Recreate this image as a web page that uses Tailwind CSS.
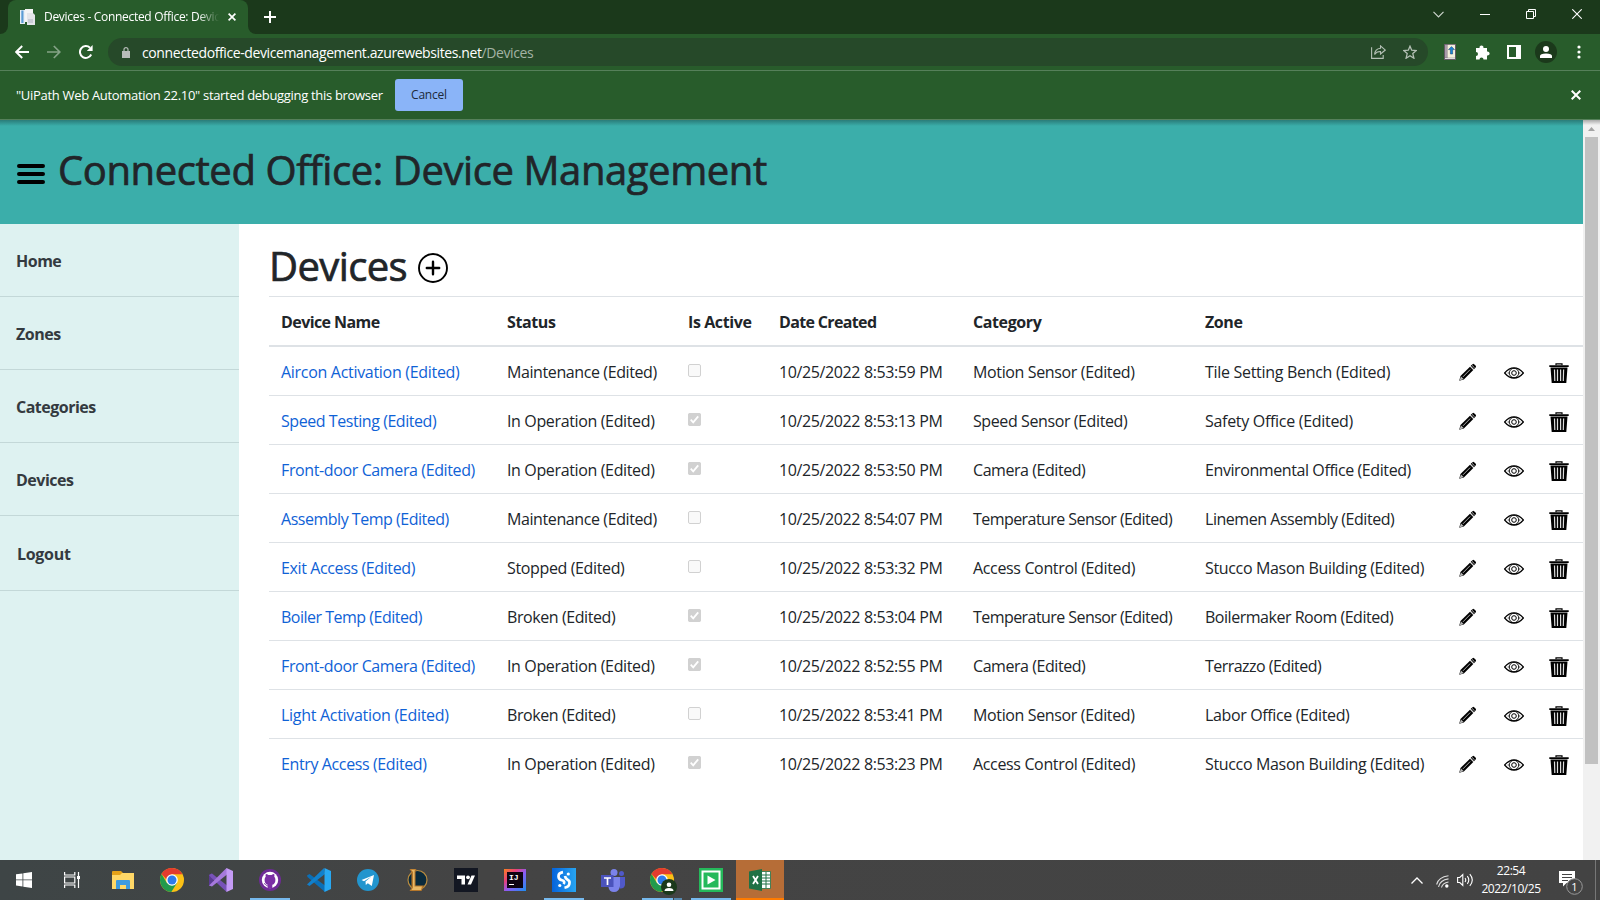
<!DOCTYPE html>
<html lang="en">
<head>
<meta charset="utf-8">
<title>Devices - Connected Office: Device Management</title>
<script src="https://cdn.jsdelivr.net/npm/@tailwindcss/browser@4"></script>
</head>
<body class="w-[1600px] h-[900px] overflow-hidden flex flex-col bg-white font-['Open_Sans','Noto_Sans',sans-serif] text-[#212529]">
<svg width="0" height="0" class="hidden">
  <symbol id="pencil" viewBox="0 0 20 20"><path d="M1.3 18.8 2.6 13.8 12.6 3.9 16.1 7.4 6.1 17.4Z" fill="#000"/><path d="M13.4 3 15.3 1.2Q16.1.5 17 1.3L18.7 3Q19.4 3.9 18.6 4.7L16.9 6.5Z" fill="#000"/><path d="m1.700 18.300 1.400-4.200 2.800 2.800Z" fill="#bbb"/><path d="m5.2 14.6 7.6-7.7M13 3.5l3.4 3.5M14.8 2.5l2.7 2.7" stroke="#ccc" stroke-width=".9" fill="none"/></symbol>
  <symbol id="eye" viewBox="0 0 20 12"><path d="M.6 6Q5 .9 10 .9T19.400 6Q15 11.100 10 11.100T.6 6Z" fill="none" stroke="#000" stroke-width="1.200"/><circle cx="10" cy="6" r="4.700" fill="none" stroke="#000" stroke-width=".9"/><circle cx="10" cy="6" r="2.300" fill="none" stroke="#000" stroke-width="1"/><path d="M3.400 6 4.600 4.800v2.400ZM16.600 6l-1.200-1.200v2.400Z" fill="#555"/></symbol>
  <symbol id="trash" viewBox="0 0 20 20"><path d="M7 2.2V.8h6v1.4" fill="none" stroke="#000" stroke-width="1.2"/><path d="M.3 2.2h19.4v1.7H.3ZM1.500 4.500h17L17.300 20H2.700Z" fill="#000"/><path d="m5.500 6.500.3 11.500M8.500 6.500V18M11.600 6.500V18M14.600 6.500 14.300 18" stroke="#ddd" stroke-width="1.200"/></symbol>
  <symbol id="chrome" viewBox="0 0 24 24"><circle cx="12" cy="12" r="12" fill="#fbc116"/><path d="M1.6 6A12 12 0 0 0 11.3 24L17 15 12 12 6.9 15Z" fill="#229a4c"/><path d="M1.6 6A12 12 0 0 1 22.4 6.2H12L7 12Z" fill="#e33b2e"/><circle cx="12" cy="12" r="5.8" fill="#fff"/><circle cx="12" cy="12" r="4.5" fill="#2f7bea"/></symbol>
</svg>

<!-- Tab strip -->
<div class="h-[34px] shrink-0 bg-[#1b391b] flex items-end justify-between">
  <div class="flex items-end h-full">
    <div class="w-2 h-2 bg-[#285c2b]"><div class="size-full bg-[#1b391b] rounded-br-lg"></div></div>
    <div class="w-[240px] h-full bg-[#285c2b] rounded-t-lg flex items-center pl-3 text-white">
      <svg class="w-4 h-[17px] shrink-0" viewBox="0 0 16 17"><path d="M0 1h5v14H0z" fill="#e8eef5"/><path d="M1.3 1.5h2.2v12.5H1.3z" fill="#5b9bd5"/><path d="M5 0h8v13H5z" fill="#f4f4f6"/><path d="M7 4h6l2 2v10H7z" fill="#e4e5ea"/><path d="M8 10h5v4H8z" fill="#c9ccd6"/></svg>
      <div class="ml-2 w-[175px] overflow-hidden whitespace-nowrap text-[12px] tracking-[-0.3px] [mask-image:linear-gradient(90deg,#000_88%,transparent)]">Devices - Connected Office: Device Management</div>
      <svg class="ml-[9px] size-[8px] shrink-0" viewBox="0 0 8 8"><path d="m.6.6 6.8 6.8m0-6.8L.6 7.4" stroke="#fff" stroke-width="1.7"/></svg>
    </div>
    <div class="w-2 h-2 bg-[#285c2b]"><div class="size-full bg-[#1b391b] rounded-bl-lg"></div></div>
    <svg class="ml-2 mb-[11px] size-3" viewBox="0 0 12 12"><path d="M6 0v12M0 6h12" stroke="#fff" stroke-width="2"/></svg>
  </div>
  <div class="flex items-center h-[28px] self-start text-white pr-[18px] gap-[36px]">
    <svg class="w-[11px] h-[7px]" viewBox="0 0 11 7"><path d="m.5.8 5 5 5-5" fill="none" stroke="#ccd4cc" stroke-width="1.2"/></svg>
    <svg class="w-[10px] h-[2px]" viewBox="0 0 10 2"><path d="M0 1.5h10" stroke="#fff"/></svg>
    <svg class="size-[10px]" viewBox="0 0 10 10"><path d="M.5 2.5h7v7h-7zM2.5 2.5v-2h7v7h-2" fill="none" stroke="#fff"/></svg>
    <svg class="size-[10px]" viewBox="0 0 10 10"><path d="m.3.3 9.4 9.4m0-9.4L.3 9.7" stroke="#fff" stroke-width="1.1"/></svg>
  </div>
</div>

<!-- Toolbar -->
<div class="h-[37px] shrink-0 bg-[#285c2b] border-b border-[#56805a] flex items-center text-white">
  <svg class="ml-[15px] size-[14px]" viewBox="0 0 14 14"><path d="M14 7H1.5M7.2 1 1.2 7l6 6" fill="none" stroke="#fff" stroke-width="1.9"/></svg>
  <svg class="ml-[18px] size-[14px]" viewBox="0 0 14 14"><path d="M0 7h12.5M6.8 1l6 6-6 6" fill="none" stroke="#85a287" stroke-width="1.7"/></svg>
  <svg class="ml-[18px] size-[14px]" viewBox="0 0 14 14"><path d="M12.200 9.500A5.900 5.900 0 1 1 11 2.800" fill="none" stroke="#fff" stroke-width="2"/><path d="M13.600 0v6H7.800Z" fill="#fff"/></svg>
  <div class="ml-[15px] w-[1320px] h-7 rounded-full bg-[#264929] flex items-center pl-[14px] pr-[11px]">
    <svg class="w-2 h-[11px]" viewBox="0 0 8 11"><path d="M0 4h8v7H0z" fill="#b7bcb9"/><path d="M2 5V2.6a2 2 0 0 1 4 0V5" fill="none" stroke="#b7bcb9" stroke-width="1.2"/></svg>
    <div class="ml-3 text-[14px] tracking-[-0.4px] whitespace-nowrap">connectedoffice-devicemanagement.azurewebsites.net<span class="text-[#a3b3a4]">/Devices</span></div>
    <svg class="ml-auto w-[15px] h-[14px]" viewBox="0 0 15 14"><path d="M.6 2.2v11.2h11.6V10" fill="none" stroke="#b4c0b5" stroke-width="1.1"/><path d="M9.5.8 14.3 5 9.5 9V6.5Q5.5 6.3 3.6 9.6 3.9 3.7 9.5 3.2Z" fill="none" stroke="#b4c0b5" stroke-width="1.1"/></svg>
    <svg class="ml-[17px] size-[14px]" viewBox="0 0 14 14"><path d="m7 1.200 1.700 4 4.600.4-3.500 3 1.100 4.600L7 10.700l-3.900 2.500 1.100-4.600L.7 5.600l4.600-.4Z" fill="none" stroke="#b4c0b5" stroke-width="1.300"/></svg>
  </div>
  <svg class="ml-[16px] w-3 h-4" viewBox="0 0 12 16"><path d="M0 0h12v16H0z" fill="#645b66"/><path d="M1 .8h2v13H1z" fill="#a89ba8"/><path d="M3.4.8H11v13H3.4z" fill="#f3f0dc"/><path d="m7.5 2.6 3 3H8.6V10H6.4V5.6H4.5Z" fill="#1a85d6" stroke="#173e68" stroke-width=".5"/><path d="M1 14h10v1H1z" fill="#ddd"/></svg>
  <svg class="ml-[19px] w-[15px] h-[15px]" viewBox="0 0 15 15"><path d="M1 3h3.6a2 2 0 1 1 3.8 0H12v3.6a2 2 0 1 1 0 3.8V14.5H8.5a2 2 0 0 0-4 0H1V11a2 2 0 0 0 0-4Z" fill="#fff"/></svg>
  <svg class="ml-[17px] size-[14px]" viewBox="0 0 14 14"><path d="M0 0h14v14H0z" fill="#fff"/><path d="M2 2h7v10H2z" fill="#285c2b"/></svg>
  <div class="ml-[14px] size-[22px] rounded-full bg-[#1b391b] flex items-center justify-center"><svg class="size-3" viewBox="0 0 12 12"><circle cx="6" cy="3" r="3" fill="#fff"/><path d="M0 12v-2q0-2.5 6-2.5T12 10v2Z" fill="#fff"/></svg></div>
  <svg class="ml-[20px] w-[4px] h-[14px]" viewBox="0 0 4 14"><g fill="#fff"><circle cx="2" cy="2" r="1.6"/><circle cx="2" cy="7" r="1.6"/><circle cx="2" cy="12" r="1.6"/></g></svg>
</div>

<!-- Debugging bar -->
<div class="h-[49px] shrink-0 bg-[#285c2b] border-b border-[#56805a] flex items-center pl-4 pr-[19px] text-white">
  <div class="w-[367px] pt-[2px] text-[13px] tracking-[-0.31px] whitespace-nowrap">"UiPath Web Automation 22.10" started debugging this browser</div>
  <div class="ml-3 w-[68px] h-8 rounded-[3px] bg-[#8ab4f8] text-[#202a3a] text-[12px] tracking-[-0.2px] flex items-center justify-center">Cancel</div>
  <svg class="ml-auto size-[10px]" viewBox="0 0 10 10"><path d="m.7.7 8.6 8.6m0-8.6L.7 9.3" stroke="#fff" stroke-width="2"/></svg>
</div>

<!-- Page -->
<div class="h-[740px] shrink-0 flex">
  <div class="w-[1583px] flex flex-col">
    <header class="h-[104px] shrink-0 bg-[linear-gradient(#2a7c79,#3baeaa_6px)] flex items-center pl-[17px]">
      <svg class="w-7 h-5 mt-[4px]" viewBox="0 0 28 20"><path d="M2 2h24M2 10h24M2 18h24" stroke="#000" stroke-width="4" stroke-linecap="round"/></svg>
      <h1 class="ml-[13px] -mt-[4px] text-[40px] leading-[48px] tracking-[-0.41px] whitespace-nowrap [-webkit-text-stroke:0.7px_#212529]">Connected Office: Device Management</h1>
    </header>
    <div class="flex flex-1">
      <nav class="w-[239px] bg-[#def2f1] text-[16px] font-bold text-[#343a40] tracking-[-0.5px] *:pt-[2px] *:border-b *:border-[#c3d8d8] *:flex *:items-center">
        <div class="h-[73px] pl-4">Home</div>
        <div class="h-[73px] pl-4">Zones</div>
        <div class="h-[73px] pl-4">Categories</div>
        <div class="h-[73px] pl-4">Devices</div>
        <div class="h-[75px] pl-[17px] tracking-[-0.3px]">Logout</div>
      </nav>
      <main class="ml-[30px] flex-1">
        <div class="h-[72px] flex items-center pt-[14px]">
          <h1 class="-mt-[2px] text-[40px] leading-[48px] tracking-[-0.6px] w-[149px] whitespace-nowrap [-webkit-text-stroke:0.7px_#212529]">Devices</h1>
          <svg class="size-[30px] mt-[2px]" viewBox="0 0 30 30"><circle cx="15" cy="15" r="14" fill="none" stroke="#000" stroke-width="1.9"/><path d="M15 8.8v12.4M8.800 15h12.4" stroke="#000" stroke-width="2.4" stroke-linecap="round"/></svg>
        </div>
        <div class="h-[51px] grid grid-cols-[226px_181px_91px_194px_232px_252px] items-center border-t border-b-2 border-[#dee2e6] *:pl-3 *:pt-[2px] text-[16px] font-bold tracking-[-0.4px]">
          <div class="tracking-[-0.58px]">Device Name</div><div>Status</div><div>Is Active</div><div class="tracking-[-0.65px]">Date Created</div><div>Category</div><div>Zone</div>
        </div>
        <div id="rows"></div>
      </main>
    </div>
  </div>
  <div class="w-[17px] bg-[linear-gradient(#aaa,#f1f1f1_5px)] flex flex-col items-center">
    <svg class="mt-[7px] w-[7px] h-[4px]" viewBox="0 0 7 4"><path d="M3.5 0 7 4H0Z" fill="#a3a3a3"/></svg>
    <div class="mt-[6px] w-[13px] h-[627px] bg-[#c1c1c1]"></div>
  </div>
</div>

<template id="row">
  <div class="h-[49px] grid grid-cols-[226px_181px_91px_194px_232px_253px_46px_45px_46px] items-center border-b border-[#dee2e6] last:border-transparent *:pl-3 text-[16px] tracking-[-0.3px] whitespace-nowrap">
    <div class="text-[#0f62d6] pt-[2px]"></div><div class="pt-[2px]"></div>
    <div class="pb-[2px]"><svg class="size-[13px]" viewBox="0 0 13 13"><rect x=".5" y=".5" width="12" height="12" rx="1.5" fill="#f9f9f9" stroke="#d1d1d1"/><path class="hidden" d="M0 2a2 2 0 0 1 2-2h9a2 2 0 0 1 2 2v9a2 2 0 0 1-2 2H2a2 2 0 0 1-2-2Z" fill="#d1d1d1"/><path class="hidden" d="m2.7 6.7 2.5 2.6 5-6" fill="none" stroke="#fff" stroke-width="1.8"/></svg></div>
    <div class="pt-[2px] tracking-[-0.38px]"></div><div class="pt-[2px]"></div><div class="pt-[2px]"></div>
    <div class="pt-[3px]"><svg class="size-[19px]"><use href="#pencil"/></svg></div>
    <div class="pt-[4px]"><svg class="w-5 h-3"><use href="#eye"/></svg></div>
    <div class="pt-[3px]"><svg class="size-5"><use href="#trash"/></svg></div>
  </div>
</template>
<script>
const data = [
  ["Aircon Activation","Maintenance",0,"8:53:59","Motion Sensor","Tile Setting Bench"],
  ["Speed Testing","In Operation",1,"8:53:13","Speed Sensor","Safety Office"],
  ["Front-door Camera","In Operation",1,"8:53:50","Camera","Environmental Office"],
  ["Assembly Temp","Maintenance",0,"8:54:07","Temperature Sensor","Linemen Assembly"],
  ["Exit Access","Stopped",0,"8:53:32","Access Control","Stucco Mason Building"],
  ["Boiler Temp","Broken",1,"8:53:04","Temperature Sensor","Boilermaker Room"],
  ["Front-door Camera","In Operation",1,"8:52:55","Camera","Terrazzo"],
  ["Light Activation","Broken",0,"8:53:41","Motion Sensor","Labor Office"],
  ["Entry Access","In Operation",1,"8:53:23","Access Control","Stucco Mason Building"]
];
// Letter spacing, in px, of the labels that need other than the row's default
const spacing = {"Speed Testing":-.44,"Front-door Camera":-.38,"Assembly Temp":-.48,"Exit Access":-.38,"Boiler Temp":-.5,"Entry Access":-.38,
  "Maintenance":-.4,"In Operation":-.36,"Stopped":-.36,"Broken":-.42,"Motion Sensor":-.36,"Speed Sensor":-.4,"Camera":-.44,"Temperature Sensor":-.56,
  "Access Control":-.35,"Environmental Office":-.41,"Linemen Assembly":-.46,"Boilermaker Room":-.47,"Terrazzo":-.53,"Labor Office":-.36,"Stucco Mason Building":-.34};
const rows = document.getElementById("rows"), tpl = document.getElementById("row");
for (const d of data) {
  const r = tpl.content.firstElementChild.cloneNode(true), c = r.children;
  for (const i of [0,1,4,5]) {
    c[i].textContent = d[i] + " (Edited)";
    if (spacing[d[i]]) c[i].style.letterSpacing = spacing[d[i]] + "px";
  }
  c[3].textContent = "10/25/2022 " + d[3] + " PM";
  if (d[2]) c[2].querySelectorAll("path").forEach(p => p.classList.remove("hidden"));
  rows.appendChild(r);
}
</script>

<!-- Taskbar -->
<div class="h-10 shrink-0 bg-[linear-gradient(90deg,#3e4546,#444_30%,#434343)] flex text-white">
  <div class="w-12 flex items-center justify-center"><svg class="size-4" viewBox="0 0 16 16"><path d="M0 2.3 6.5 1.4v6.1H0ZM7.3 1.3 16 0v7.5H7.3ZM0 8.3h6.5v6.2L0 13.6ZM7.3 8.3H16V16l-8.7-1.3Z" fill="#fff"/></svg></div>
  <div class="w-12 mr-[3px] flex items-center justify-center"><svg class="size-4" viewBox="0 0 16 16"><path d="M.6 0v3h10.2V0M.6 16v-3h10.2v3M.6 5h10.2v6H.6zM14.5 0v16" fill="none" stroke="#fff" stroke-width="1.2"/><path d="M13 4h3v3h-3z" fill="#fff"/></svg></div>
  <div class="flex gap-px *:w-12 *:flex *:items-center *:justify-center *:relative">
    <div><svg class="w-[22px] h-[18px]" viewBox="0 0 22 18"><path d="M0 1q0-1 1-1h8l2 2h11v16H0Z" fill="#e5a219"/><path d="M0 4h8l2-2h12v16H0Z" fill="#ffd867"/><path d="M4 10q0-1 1-1h12q1 0 1 1v8h-4v-4H8v4H4Z" fill="#3d9be0"/></svg></div>
    <div><svg class="size-6"><use href="#chrome"/></svg></div>
    <div><svg class="size-6" viewBox="0 0 24 24"><path d="M0 7 2.5 5.5 4.500 7V17L0 18Z" fill="#5a3b93"/><path d="M0 7 3 5.500 18 17.500V24L16.500 23 2 9.500Z" fill="#7852b8"/><path d="M0 17.500 16.500 1 18 0v6.500L3 18.500Z" fill="#a679dc"/><path d="m17.5 0 6.500 3v18l-6.500 3Z" fill="#c49bf5"/></svg></div>
    <div><svg class="size-[22px]" viewBox="0 0 22 22"><circle cx="11" cy="11" r="11" fill="#6e2b96"/><circle cx="11" cy="11" r="8.2" fill="#fff"/><path d="M8.700 19.500v-3.700Q5.600 15 5.600 10.800q0-1.900 1.100-3-.4-1.500.2-2.800 1.400.1 2.500 1.100 1.600-.4 3.200 0 1.100-1 2.500-1.100.6 1.300.2 2.800 1.100 1.100 1.100 3 0 4.200-3.100 5v3.700Z" fill="#7b2fa5"/><path d="M5 14.500q1.200.2 1.800 1.300T9 17" fill="none" stroke="#7b2fa5" stroke-width=".9"/></svg><i class="absolute bottom-0 w-10 h-[2px] bg-[#76b9ed]"></i></div>
    <div><svg class="size-6" viewBox="0 0 24 24"><path d="M0 7.500 2.500 6 18 17.500V24L.5 9Z" fill="#0a6fb8"/><path d="M0 16.500 17 0l1 6L2.500 18Z" fill="#1180cc"/><path d="m17.5 0 6.500 3v18l-6.500 3Z" fill="#28a8f2"/></svg></div>
    <div><svg class="size-[22px]" viewBox="0 0 22 22"><circle cx="11" cy="11" r="11" fill="#2295ce"/><path d="m4.500 11 12.500-5-2.200 11-4-2.700-2 1.700-.3-3.500 6-5-7.500 4.700Z" fill="#fff"/></svg></div>
    <div><svg class="w-[22px] h-[22px]" viewBox="0 0 22 22"><circle cx="11.500" cy="11" r="9.500" fill="#0a2a3c" stroke="#b88b3f" stroke-width="1.200"/><path d="M3.500 0H10.500L9.500 2v14.500H18L15.500 22H3.500L5.500 19V3Z" fill="#b5772a"/><path d="M5 .8h4L8.500 2v15.500h7.500L15 21H5.500L7 18.500V3Z" fill="#e8b866"/></svg></div>
    <div><svg class="size-6" viewBox="0 0 24 24"><path d="M0 0h24v24H0z" fill="#131722"/><path d="M3 7.500h8v9H7.500v-5.500H3ZM17.500 7.500H21l-4 9h-3.500Z" fill="#fff"/><circle cx="14" cy="9.300" r="1.900" fill="#fff"/></svg></div>
    <div><div class="size-[22px] bg-[linear-gradient(135deg,#fc801d,#e7407c_30%,#8a5cf5_55%,#1a8ff0)] flex items-center justify-center"><div class="size-[16px] bg-[#0d0410] font-['Liberation_Mono',monospace] font-bold text-[8px] leading-[8px] pl-[2px] pt-[2px]">IJ<div class="w-[5px] h-px bg-white mt-[2px]"></div></div></div></div>
    <div><svg class="size-6" viewBox="0 0 24 24"><defs><linearGradient id="sg"><stop stop-color="#0563dc"/><stop offset="1" stop-color="#27a5f2"/></linearGradient></defs><path d="M0 0h24v24H0z" fill="url(#sg)"/><path d="M11 4.200Q6.500 5 6.500 8.200T10 12.300 11.500 16M13 8q.3 2.500 2.600 3.700T17.500 15Q17.500 18.800 12.500 19.800" fill="none" stroke="#fff" stroke-width="2.700"/><circle cx="7.800" cy="17.500" r="1.600" fill="#fff"/><circle cx="16.300" cy="6" r="1.600" fill="#fff"/></svg><i class="absolute bottom-0 w-10 h-[2px] bg-[#76b9ed]"></i></div>
    <div><svg class="w-6 h-[23px]" viewBox="0 0 24 23"><circle cx="13" cy="3.5" r="3.5" fill="#7b83eb"/><circle cx="20.5" cy="4.5" r="2.5" fill="#5059c9"/><path d="M16 8h8v8q-1 4-5 3.5Z" fill="#5059c9"/><path d="M8 8h11v9q-1 6-6 6t-5.500-5Z" fill="#7b83eb"/><path d="M0 6h12.500v12H0z" fill="#4b53bc"/><path d="M3 9h7M6.5 9v7" stroke="#fff" stroke-width="1.7"/></svg></div>
    <div><svg class="size-6"><use href="#chrome"/></svg><svg class="absolute left-[23px] top-[19px] size-4" viewBox="0 0 16 16"><circle cx="8" cy="8" r="8" fill="#1b391b"/><circle cx="8" cy="5.8" r="2.3" fill="#fff"/><path d="M3.500 12q0-3 4.500-3t4.500 3Z" fill="#fff"/></svg><i class="absolute bottom-0 w-10 h-[2px] bg-[linear-gradient(90deg,#76b9ed_31px,#434343_31px,#434343_32px,#5688ae_32px)]"></i></div>
    <div><svg class="size-6" viewBox="0 0 24 24"><path d="M0 0h24v24H0z" fill="#25b95b"/><path d="M3.500 3.500h17v17h-17z" fill="none" stroke="#fff" stroke-width="2"/><path d="m8.500 7.500 8 4.500-8 4.500Z" fill="#fff"/></svg><i class="absolute bottom-0 w-10 h-[2px] bg-[#76b9ed]"></i></div>
    <div class="bg-[#b66d37]"><svg class="w-[22px] h-[22px]" viewBox="0 0 22 22"><path d="M12 2.500h9.500v17H12Z" fill="#fff" stroke="#1f7145" stroke-width=".8"/><path d="M13 6h8M13 9h8M13 12h8M13 15h8M17 3v16" stroke="#217346"/><path d="m0 2.500 13-2.500v22L0 19.500Z" fill="#1f7145"/><path d="m4 7 5 8M9 7l-5 8" stroke="#fff" stroke-width="1.8"/></svg><i class="absolute bottom-0 w-12 h-[2px] bg-[#ff7b00]"></i></div>
  </div>
  <div class="ml-auto flex items-center">
    <svg class="w-3 h-[7px]" viewBox="0 0 12 7"><path d="m.5 6.500 5.500-5.500 5.500 5.500" fill="none" stroke="#fff" stroke-width="1.3"/></svg>
    <svg class="ml-[13px] mt-[2px] size-[13px]" viewBox="0 0 13 13"><path d="M.6 9.500Q2.500 2 12.500.8M2.500 11.800Q4 5 12.500 3.900M5.500 12.500Q6.500 8 12.500 7" fill="none" stroke="#ddd" stroke-width="1.1"/><circle cx="10.8" cy="11" r="1.7" fill="#fff"/></svg>
    <svg class="ml-[8px] w-[17px] h-[14px]" viewBox="0 0 17 14"><path d="M.6 4.500h2.200L5.800 1.500v11l-3-3H.6Z" fill="none" stroke="#fff" stroke-width="1.1"/><path d="M8 5q1.500 2 0 4M10.300 3.200q3 3.800 0 7.600M12.800 1.200q5 5.800 0 11.600" fill="none" stroke="#fff" stroke-width="1.1"/></svg>
    <div class="ml-[4px] w-[66px] text-center text-[12px] leading-[18px] tracking-[-0.45px] whitespace-nowrap pb-px">22:54<br>2022/10/25</div>
    <svg class="ml-[15px] w-6 h-6 mt-[5px]" viewBox="0 0 24 24"><path d="M0 0h16v12H7.500L4 15.500V12H0Z" fill="#fff"/><path d="M3 3.500h10M3 6.500h10M3 9.500h6" stroke="#444"/><circle cx="15.500" cy="15.500" r="7.800" fill="#444" stroke="#999"/><text x="15.500" y="19.500" text-anchor="middle" font-size="11" fill="#fff" font-family="Open Sans">1</text></svg>
    <div class="ml-[12px] mr-[4px] w-px h-10 bg-[#777]"></div>
  </div>
</div>
</body>
</html>
